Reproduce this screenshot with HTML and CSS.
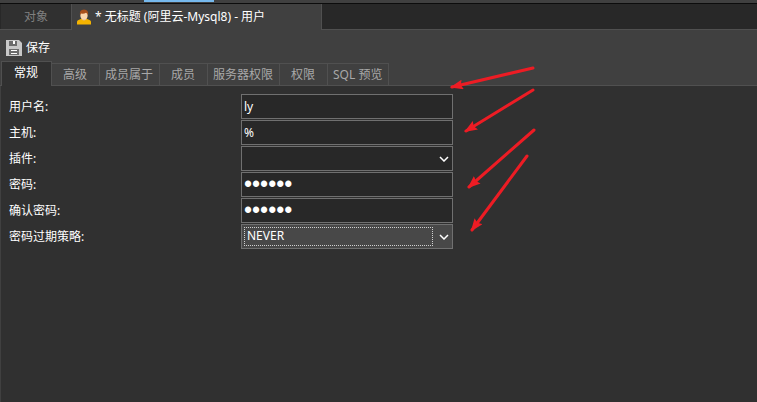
FILE: index.html
```html
<!DOCTYPE html>
<html lang="zh-CN">
<head>
  <meta charset="UTF-8" />
  <meta name="viewport" content="width=device-width, initial-scale=1.0" />
  <title>无标题 (阿里云-Mysql8) - 用户</title>
  <link rel="stylesheet" href="styles.css">
</head>
<body>

  <div class="top-strip"><div class="top-accent"></div></div>

  <nav class="window-tabs">
    <button type="button" class="window-tab">对象</button>
    <button type="button" class="window-tab current">
      <svg class="user-icon" width="14" height="16" viewBox="0 0 14 16">
        <path d="M0 15.500V12.800Q0 11.500 1.500 11L5 9.500H9L12.500 11Q14 11.500 14 12.800V15.500Z" fill="#f5b400"/>
        <path d="M4.800 8.500H9.200V10.500Q7 12.500 4.800 10.500Z" fill="#e9b88c"/>
        <ellipse cx="7" cy="6" rx="3.700" ry="4.500" fill="#fbd5ad"/>
        <path d="M3 6.500Q2 .5 7 .5T11 6.500Q10.500 4.500 9 3.700Q7 5 4 4.500Q3.300 5.300 3 6.500Z" fill="#a84f1c"/>
      </svg>
      <span>* 无标题 (阿里云-Mysql8) - 用户</span>
    </button>
  </nav>

  <div class="toolbar">
    <button type="button" class="save-button">
      <svg width="16" height="16" viewBox="0 0 16 16">
        <path d="M0 0H13L16 3V16H0Z" fill="#c8c8c8"/>
        <path d="M3 1H11V6H3Z" fill="#6c6c6c"/>
        <path d="M7 1H9V4H7Z" fill="#fff"/>
        <path d="M3 9H13V15H3Z" fill="#6c6c6c"/>
        <path d="M5 10H11V11H5ZM5 13H11V14H5Z" fill="#fff"/>
      </svg>
      <span>保存</span>
    </button>
  </div>

  <nav class="page-tabs">
    <button type="button" class="page-tab active">常规</button>
    <button type="button" class="page-tab">高级</button>
    <button type="button" class="page-tab">成员属于</button>
    <button type="button" class="page-tab">成员</button>
    <button type="button" class="page-tab">服务器权限</button>
    <button type="button" class="page-tab">权限</button>
    <button type="button" class="page-tab">SQL 预览</button>
  </nav>

  <form class="panel">
    <label for="username">用户名:</label>
    <input class="field" type="text" id="username" value="ly" />

    <label for="host">主机:</label>
    <input class="field" type="text" id="host" value="%" />

    <label for="plugin">插件:</label>
    <div class="select-wrap">
      <select class="field" id="plugin">
        <option></option>
      </select>
      <svg class="chevron" width="10" height="6" viewBox="0 0 10 6"><path d="M1 1L5 5L9 1"/></svg>
    </div>

    <label for="password">密码:</label>
    <input class="field" type="password" id="password" value="secret" />

    <label for="confirm">确认密码:</label>
    <input class="field" type="password" id="confirm" value="secret" />

    <label for="expire">密码过期策略:</label>
    <div class="select-wrap focused">
      <select class="field" id="expire">
        <option>NEVER</option>
      </select>
      <svg class="chevron" width="10" height="6" viewBox="0 0 10 6"><path d="M1 1L5 5L9 1"/></svg>
    </div>
  </form>

  <!-- arrows pointing at the fields to fill in -->
  <svg class="arrows" width="90" height="170" viewBox="448 65 90 170">
    <defs>
      <marker id="head" viewBox="0 0 13 10" refX="11" refY="5" markerWidth="13" markerHeight="10" markerUnits="userSpaceOnUse" orient="auto">
        <path d="M13 5L0 0L2 5L0 10Z" fill="#ed1c24"/>
      </marker>
    </defs>
    <path d="M533 68L452 87"/>
    <path d="M533 90L466 131"/>
    <path d="M534 130L469 187"/>
    <path d="M527 156L472 230"/>
  </svg>

</body>
</html>
```

FILE: styles.css
```css
* {
  box-sizing: border-box;
}
body {
  margin: 0;
  min-height: 100vh;
  display: flex;
  flex-direction: column;
  position: relative;
  background-color: #404040;
  color: #fff;
  font-family: 'Noto Sans', 'Noto Sans CJK SC', sans-serif;
  font-size: 12px;
  line-height: 16px;
}
button {
  margin: 0;
  padding: 0;
  border: none;
  background: none;
  color: inherit;
  font: inherit;
  white-space: nowrap;
}
.top-strip {
  height: 4px;
  border-bottom: 1px solid #0c0c0c;
}
.top-accent {
  width: 70px;
  height: 2px;
  margin-left: 144px;
  background-color: #76b9ed;
}
.window-tabs {
  display: flex;
  height: 26px;
  padding-left: 1px;
  background: #282828 linear-gradient(#505050, #505050) bottom / 100% 1px no-repeat;
}
.window-tab {
  width: 71px;
  border-right: 1px solid #505050;
  border-bottom: 1px solid #505050;
  background-color: #303030;
  color: #808080;
}
.window-tab.current {
  display: flex;
  align-items: center;
  gap: 4px;
  width: 250px;
  padding-left: 5px;
  border-bottom: none;
  background-color: #404040;
  color: #fff;
}
.toolbar {
  display: flex;
  align-items: center;
  height: 31px;
  padding: 4px 6px 0;
}
.save-button {
  display: flex;
  align-items: center;
  gap: 4px;
}
.page-tabs {
  display: flex;
  align-items: flex-end;
  height: 25px;
  padding-left: 1px;
  background: linear-gradient(#505050, #505050) bottom / 100% 1px no-repeat;
}
.page-tab {
  min-width: 48px;
  height: 23px;
  padding: 0 6px 0 5px;
  border: 1px solid #505050;
  border-left: none;
  color: #a8a8a8;
}
.page-tab.active {
  width: 51px;
  height: 25px;
  padding-bottom: 3px;
  border-left: 1px solid #505050;
  border-bottom: none;
  background-color: #303030;
  color: #fff;
}
.panel {
  flex: 1;
  display: grid;
  grid-template-columns: 232px 212px;
  align-content: start;
  align-items: center;
  row-gap: 1px;
  padding: 8px;
  border-left: 1px solid #404040;
  background-color: #303030;
}
.field {
  display: block;
  width: 100%;
  height: 25px;
  margin: 0;
  padding: 0 2px 1px;
  border: 1px solid #707070;
  border-radius: 0;
  outline: none;
  background-color: #282828;
  color: #fff;
  font: inherit;
  appearance: none;
}
.field[type=password] {
  font-family: 'Liberation Sans', sans-serif;
  font-size: 23px;
}
.select-wrap {
  position: relative;
}
.chevron {
  position: absolute;
  top: 10px;
  right: 4px;
  fill: none;
  stroke: #fff;
  stroke-width: 1.5;
  pointer-events: none;
}
.focused .field {
  padding-left: 5px;
  background-color: #484848;
}
.focused::after {
  content: "";
  position: absolute;
  top: 3px;
  bottom: 3px;
  left: 3px;
  right: 20px;
  border: 1px dotted #d0d0d0;
  pointer-events: none;
}
.arrows {
  position: absolute;
  top: 65px;
  left: 448px;
  fill: none;
  stroke: #ed1c24;
  stroke-width: 3;
  stroke-linecap: round;
  pointer-events: none;
}
.arrows > path {
  marker-end: url(#head);
}
.arrows marker {
  stroke: none;
}
```
